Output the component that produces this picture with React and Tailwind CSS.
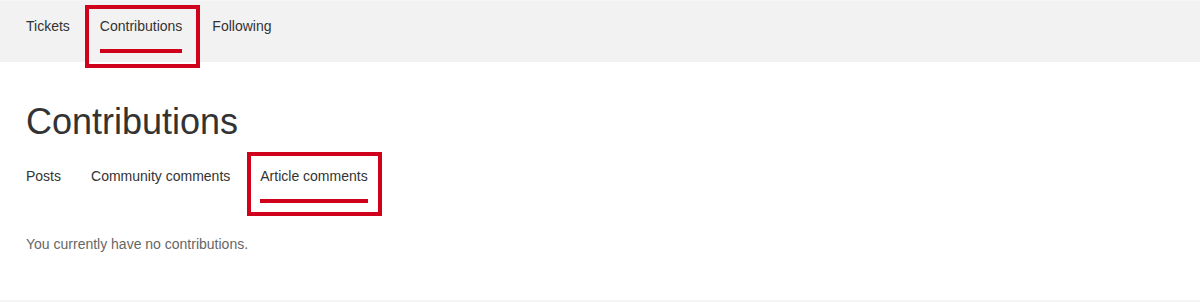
export default function App() {
  const font = { fontFamily: '"Liberation Sans", Arial, sans-serif' };
  return (
    <div className="w-[1200px] bg-white text-[#333]" style={font}>
      {/* top nav */}
      <div className="bg-[#f2f2f2]">
        <div className="h-[1px] bg-[#f6f6f6]" />
        <nav className="h-[61px] flex pl-[11px]">
          <div className="px-[15px] pt-[15px] text-[14px] leading-[20px]">Tickets</div>
          <div className="relative px-[15px] pt-[15px] text-[14px] leading-[20px]">
            <div>Contributions</div>
            <div className="mt-[13px] h-[4px] bg-[#d0021b]" />
            <div className="absolute left-0 top-[4px] w-[115px] h-[63px] border-[4px] border-[#d0021b] z-10" />
          </div>
          <div className="px-[15px] pt-[15px] text-[14px] leading-[20px]">Following</div>
        </nav>
      </div>

      {/* main */}
      <main className="px-[11px] pb-[46px] border-b-2 border-[#f5f5f5]">
        <h1 className="px-[15px] mt-[40px] text-[36px] leading-[40px] font-normal">Contributions</h1>
        <div className="flex mt-[24px]">
          <div className="px-[15px] text-[14px] leading-[20px]">Posts</div>
          <div className="px-[15px] text-[14px] leading-[20px]">Community comments</div>
          <div className="relative px-[15px] text-[14px] leading-[20px]">
            <div>Article comments</div>
            <div className="mt-[13px] h-[4px] bg-[#d0021b]" />
            <div className="absolute left-[2px] top-[-14px] w-[135px] h-[64px] border-[4px] border-[#d0021b]" />
          </div>
        </div>
        <p className="px-[15px] mt-[31px] text-[14px] leading-[20px] text-[#666]">
          You currently have no contributions.
        </p>
      </main>
    </div>
  );
}
